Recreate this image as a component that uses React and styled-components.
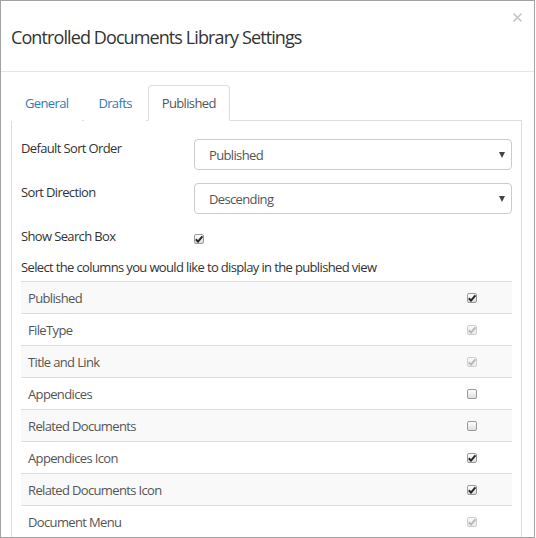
import React from "react";
import styled, { createGlobalStyle } from "styled-components";

const Global = createGlobalStyle`
  html, body { margin: 0; padding: 0; background: #fff; }
  body { font-family: "Open Sans", "Liberation Sans", sans-serif; letter-spacing: -0.04em; }
  * { box-sizing: border-box; }
`;

const Modal = styled.div`
  position: relative;
  width: 535px;
  height: 538px;
  border: 1px solid #a3a3a3;
  background: #fff;
  overflow: hidden;
  display: flex;
  flex-direction: column;
`;

const Header = styled.div`
  padding: 24px 11px 21px 10px;
  border-bottom: 1px solid #e5e5e5;
`;

const Title = styled.h4`
  margin: 0;
  font-size: 18px;
  line-height: 25px;
  font-weight: 400;
  letter-spacing: -0.05em;
  color: #333;
`;

const Close = styled.button`
  position: absolute;
  top: 11px;
  right: 11px;
  width: 11px;
  height: 11px;
  padding: 0;
  border: 0;
  background: none;
  display: flex;
  align-items: center;
  justify-content: center;
`;

const Body = styled.div`
  flex: 1;
  padding: 13px 12px 0 10px;
  display: flex;
  flex-direction: column;
  min-height: 0;
`;

const Tabs = styled.ul`
  display: flex;
  margin: 0;
  padding: 0;
  list-style: none;
  position: relative;
  z-index: 1;
  margin-bottom: -1px;
`;

const Tab = styled.li`
  margin-right: 2px;
  padding: 8px 13px;
  font-size: 13px;
  line-height: 18px;
  color: ${(p) => (p.$active ? "#555" : "#337ab7")};
  border: 1px solid ${(p) => (p.$active ? "#ddd" : "transparent")};
  border-bottom-color: ${(p) => (p.$active ? "#fff" : "transparent")};
  border-radius: 4px 4px 0 0;
  background: #fff;
`;

const Panel = styled.div`
  flex: 1;
  border: 1px solid #ddd;
  border-bottom: 0;
  padding: 18px 9px 0 9px;
`;

const FormRow = styled.div`
  display: flex;
  align-items: flex-start;
  margin-bottom: 13px;
`;

const Label = styled.div`
  width: 173px;
  flex: none;
  font-size: 13px;
  line-height: 18px;
  font-weight: 400;
  color: #333;
`;

const Select = styled.div`
  flex: 1;
  height: 31px;
  border: 1px solid #ccc;
  border-radius: 4px;
  display: flex;
  align-items: center;
  justify-content: space-between;
  padding: 0 6px 0 14px;
  font-size: 13px;
  color: #555;
`;

const Arrow = styled.span`
  width: 0;
  height: 0;
  border-left: 3px solid transparent;
  border-right: 3px solid transparent;
  border-top: 6px solid #444;
  margin-top: 1px;
`;

const CheckCell = styled.div`
  padding-top: 7px;
  line-height: 0;
`;

const Intro = styled.div`
  font-size: 13px;
  line-height: 18px;
  font-weight: 400;
  color: #333;
  margin-top: 4px;
  margin-bottom: 5px;
`;

const Table = styled.div`
  display: flex;
  flex-direction: column;
`;

const Row = styled.div`
  height: 32px;
  flex: none;
  display: flex;
  align-items: center;
  justify-content: space-between;
  padding: 0 35px 0 7px;
  border-top: 1px solid #ddd;
  background: ${(p) => (p.$striped ? "#f9f9f9" : "#fff")};
  font-size: 13px;
  color: #555;
`;

const Box = styled.span`
  display: inline-flex;
  align-items: center;
  justify-content: center;
  width: 10px;
  height: 10px;
  border: 1px solid ${(p) => (p.$disabled ? "#cfcfcf" : "#9a9a9a")};
  border-radius: 2px;
  background: ${(p) =>
    p.$disabled
      ? "linear-gradient(#fafafa, #ececec)"
      : "linear-gradient(#ffffff, #dedede)"};
`;

function Checkbox({ checked, disabled }) {
  return (
    <Box $disabled={disabled}>
      {checked && (
        <svg width="8" height="8" viewBox="0 0 8 8">
          <path
            d="M0.8 4.3 L3 6.6 L7.4 1.3"
            fill="none"
            stroke={disabled ? "#b8b8b8" : "#2a2a2a"}
            strokeWidth="2"
          />
        </svg>
      )}
    </Box>
  );
}

const columns = [
  { name: "Published", checked: true },
  { name: "FileType", checked: true, disabled: true },
  { name: "Title and Link", checked: true, disabled: true },
  { name: "Appendices", checked: false },
  { name: "Related Documents", checked: false },
  { name: "Appendices Icon", checked: true },
  { name: "Related Documents Icon", checked: true },
  { name: "Document Menu", checked: true, disabled: true },
];

export default function App() {
  return (
    <>
      <Global />
      <Modal>
        <Header>
          <Title>Controlled Documents Library Settings</Title>
        </Header>
        <Close aria-label="Close">
          <svg width="9" height="9" viewBox="0 0 9 9">
            <path d="M0.5 0.5 L8.5 8.5 M8.5 0.5 L0.5 8.5" stroke="#c9c9c9" strokeWidth="1.6" />
          </svg>
        </Close>
        <Body>
          <Tabs>
            <Tab>General</Tab>
            <Tab>Drafts</Tab>
            <Tab $active>Published</Tab>
          </Tabs>
          <Panel>
            <FormRow>
              <Label>Default Sort Order</Label>
              <Select>
                <span>Published</span>
                <Arrow />
              </Select>
            </FormRow>
            <FormRow>
              <Label>Sort Direction</Label>
              <Select>
                <span>Descending</span>
                <Arrow />
              </Select>
            </FormRow>
            <FormRow>
              <Label>Show Search Box</Label>
              <CheckCell>
                <Checkbox checked />
              </CheckCell>
            </FormRow>
            <Intro>Select the columns you would like to display in the published view</Intro>
            <Table>
              {columns.map((c, i) => (
                <Row key={c.name} $striped={i % 2 === 0}>
                  <span>{c.name}</span>
                  <Checkbox checked={c.checked} disabled={c.disabled} />
                </Row>
              ))}
            </Table>
          </Panel>
        </Body>
      </Modal>
    </>
  );
}
